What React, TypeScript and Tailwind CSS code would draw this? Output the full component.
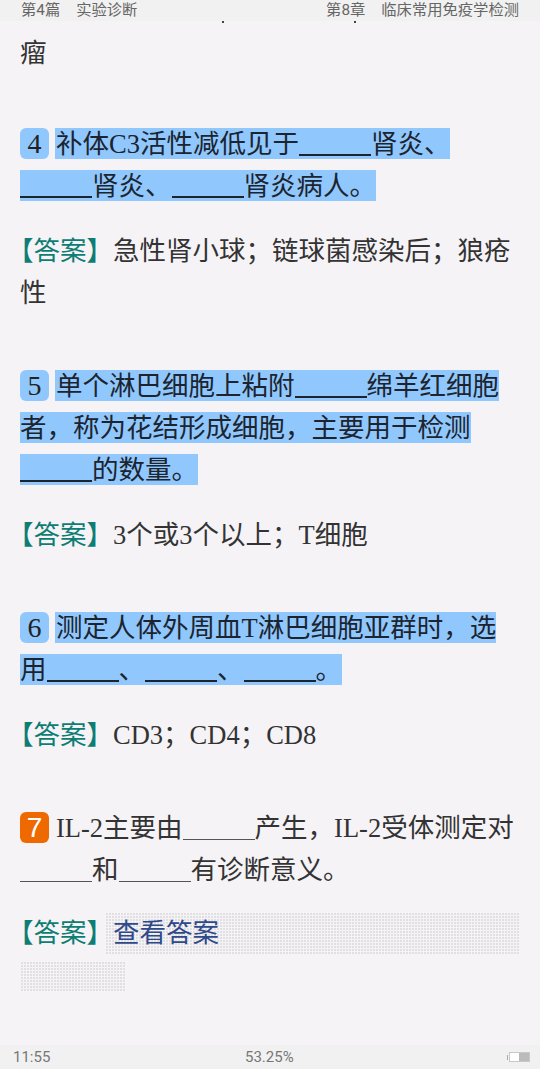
const serif = "font-['Liberation_Serif','Noto_Sans_CJK_SC',serif]";

function Blank({ thin = false }: { thin?: boolean }) {
  return <span className={`self-end shrink-0 w-[72px] mb-[3px] ${thin ? "h-[1px] bg-[#555]" : "h-[2px] bg-current"}`} />;
}

function Num({ n, active = false }: { n: number; active?: boolean }) {
  return (
    <span
      className={`flex items-center justify-center w-[29px] h-[31px] mr-[6px] rounded-[6px] text-[28px] ${
        active ? "bg-[#ee6a00] text-white font-['Liberation_Sans',sans-serif]" : "bg-[#90c8fd] text-[#222]"
      }`}
    >
      {n}
    </span>
  );
}

function Line({ children, mt = 0 }: { children: React.ReactNode; mt?: number }) {
  return (
    <div className="flex items-center h-[31px] whitespace-nowrap" style={{ marginTop: mt }}>
      {children}
    </div>
  );
}

// plain run of text, sits a pixel under the box centre like the reference
function Tx({ children, className = "" }: { children: React.ReactNode; className?: string }) {
  return <span className={`flex items-center h-[31px] pt-[2px] ${className}`}>{children}</span>;
}

function Hl({ children, className = "" }: { children: React.ReactNode; className?: string }) {
  return <Tx className={`bg-[#90c8fd] text-[#1c2430] ${className}`}>{children}</Tx>;
}

function Answer({ children, mt }: { children: React.ReactNode; mt: number }) {
  return (
    <Line mt={mt}>
      <Tx className="text-[#0e7d73] ml-[-13px]">【答案】</Tx>
      <Tx>{children}</Tx>
    </Line>
  );
}

const dots =
  "bg-[linear-gradient(90deg,#f6f3f7_1px,transparent_1px),linear-gradient(#f6f3f7_1px,transparent_1px)] bg-[length:3px_3px] bg-[#e0dfe2]";

export default function App() {
  return (
    <div className={`flex flex-col w-[540px] h-[1069px] overflow-hidden bg-[#f6f3f7] text-[#333] text-[26.5px] ${serif}`}>
      <header className="flex justify-between h-[21px] shrink-0 pl-[21px] pr-[21px] items-center bg-[#f1f1f1] text-[#666] text-[15.3px] font-['Roboto','Noto_Sans_CJK_SC',sans-serif]">
        <span className="flex gap-[16px]">
          <span>第4篇</span>
          <span>实验诊断</span>
        </span>
        <span className="flex gap-[16px]">
          <span>第8章</span>
          <span>临床常用免疫学检测</span>
        </span>
      </header>

      <main className="flex-1 pl-[20px]">
        {/* bottoms of the brackets from the line cut off by the header */}
        <div className="flex gap-[130px] h-[2px] pl-[202px]">
          <span className="w-[2px] h-[2px] bg-[#444]" />
          <span className="w-[2px] h-[2px] bg-[#444]" />
        </div>

        <Line mt={14}>
          <Tx>瘤</Tx>
        </Line>

        <Line mt={60}>
          <Num n={4} />
          <Hl className="pl-[1px]">补体C3活性减低见于<Blank />肾炎、</Hl>
        </Line>
        <Line mt={11}>
          <Hl><Blank />肾炎、<Blank />肾炎病人。</Hl>
        </Line>
        <Answer mt={34}>急性肾小球；链球菌感染后；狼疮</Answer>
        <Line mt={11}>
          <Tx>性</Tx>
        </Line>

        <Line mt={62}>
          <Num n={5} />
          <Hl className="pl-[1px]">单个淋巴细胞上粘附<Blank />绵羊红细胞</Hl>
        </Line>
        <Line mt={11}>
          <Hl>者，称为花结形成细胞，主要用于检测</Hl>
        </Line>
        <Line mt={11}>
          <Hl><Blank />的数量。</Hl>
        </Line>
        <Answer mt={34}>3个或3个以上；T细胞</Answer>

        <Line mt={62}>
          <Num n={6} />
          <Hl className="pl-[1px]">测定人体外周血T淋巴细胞亚群时，选</Hl>
        </Line>
        <Line mt={11}>
          <Hl>用<Blank />、<Blank />、<Blank />。</Hl>
        </Line>
        <Answer mt={34}>CD3；CD4；CD8</Answer>

        <Line mt={62}>
          <Num n={7} active />
          <Tx className="pl-[1px]">IL-2主要由<Blank thin />产生，IL-2受体测定对</Tx>
        </Line>
        <Line mt={11}>
          <Tx><Blank thin />和<Blank thin />有诊断意义。</Tx>
        </Line>

        <div className="flex items-center h-[42px] mt-[27px]">
          <Tx className="text-[#0e7d73] ml-[-13px] mr-[-8px]">【答案】</Tx>
          <div className={`flex items-center w-[415px] h-[42px] pl-[8px] pt-[2px] text-[#2f4a8a] ${dots}`}>查看答案</div>
        </div>
        <div className={`w-[105px] h-[31px] mt-[7px] ${dots}`} />
      </main>

      <footer className="relative flex justify-between items-center h-[24px] shrink-0 pl-[13px] pr-[10px] bg-[#f1f1f1] text-[#777] text-[15px] font-['Roboto',sans-serif]">
        <span>11:55</span>
        <span className="absolute left-[245px]">53.25%</span>
        <span className="flex items-center">
          <span className="w-[1px] h-[5px] bg-[#aaa]" />
          <span className="flex justify-end w-[21px] h-[10px] ml-[1px] border border-[#c8c8c8] bg-white">
            <span className="w-[10px] bg-[#bbb]" />
          </span>
        </span>
      </footer>
    </div>
  );
}
